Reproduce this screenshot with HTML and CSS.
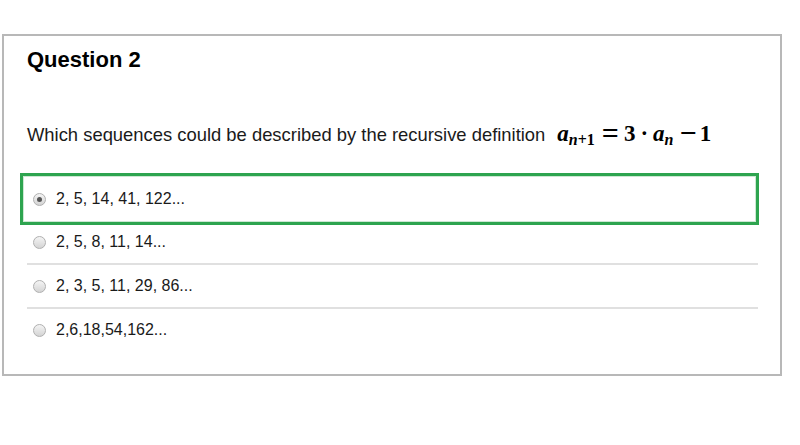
FILE: index.html
```html
<!DOCTYPE html>
<html lang="en">

<head>
  <meta charset="UTF-8" />
  <title>Question 2</title>
  <link rel="stylesheet" href="styles.css">
</head>

<body>

  <div class="card">
    <div class="card-header">
      <h2>Question 2</h2>
    </div>

    <p class="prompt">
      <span>Which sequences could be described by the recursive definition</span>
      <span class="math"><i>a</i><sub><i>n</i>+1</sub><span class="eq">=</span><b>3</b><span class="dot">&middot;</span><i>a</i><sub><i>n</i></sub><span class="minus">&minus;</span><b>1</b></span>
    </p>

    <div class="options">
      <label class="option selected">
        <input type="radio" name="q2" checked> 2, 5, 14, 41, 122...
      </label>
      <label class="option">
        <input type="radio" name="q2"> 2, 5, 8, 11, 14...
      </label>
      <label class="option">
        <input type="radio" name="q2"> 2, 3, 5, 11, 29, 86...
      </label>
      <label class="option last">
        <input type="radio" name="q2"> 2,6,18,54,162...
      </label>
    </div>
  </div>

</body>

</html>
```

FILE: styles.css
```css
body {
  margin: 0;
  background: #fff;
  font-family: "Liberation Sans", Arial, sans-serif;
  color: #111;
}

.card {
  margin: 34px 0 0 2px;
  width: 780px;
  height: 342px;
  box-sizing: border-box;
  border: 2px solid #b8b8b8;
  background: #fff;
}

.card-header {
  padding: 12px 23px 0;
}

.card-header h2 {
  margin: 0;
  font-size: 22px;
  line-height: 24px;
  font-weight: bold;
  color: #000;
}

.prompt {
  margin: 50px 0 0 23px;
  display: flex;
  align-items: baseline;
  font-size: 18.4px;
  line-height: 24px;
  color: #1a1a1a;
}

.math {
  margin-left: 12px;
  font-family: "Liberation Serif", "Times New Roman", serif;
  font-size: 23px;
  font-weight: bold;
  color: #000;
  white-space: nowrap;
}

.math i {
  font-style: italic;
}

.math sub {
  font-size: 16px;
  vertical-align: -4px;
  line-height: 0;
}

.math .eq,
.math .minus {
  font-size: 30px;
  line-height: 0;
  vertical-align: -2px;
}

.math .eq {
  margin: 0 5px 0 7px;
}

.math .dot {
  margin: 0 5px;
}

.math .minus {
  margin: 0 3px 0 6px;
}

.options {
  margin: 26px 0 0 23px;
  width: 731px;
}

.option {
  display: flex;
  align-items: center;
  height: 42px;
  padding-left: 6px;
  border-bottom: 2px solid #e0e0e0;
  font-size: 16px;
  color: #1a1a1a;
  cursor: pointer;
}

.option.selected {
  height: 52px;
  box-sizing: border-box;
  margin: 0 -1px -4px -7px;
  padding-left: 10px;
  border: 3px solid #2ea44f;
  box-shadow: inset 0 0 0 1px #cde8d3;
}

.option.last {
  border-bottom: none;
}

.option input {
  appearance: none;
  -webkit-appearance: none;
  margin: 0 10px 0 0;
  width: 13px;
  height: 13px;
  border-radius: 50%;
  border: 1px solid #b0b0b0;
  background: linear-gradient(#f4f4f4, #d4d4d4);
  box-sizing: border-box;
  position: relative;
}

.option input:checked::after {
  content: "";
  position: absolute;
  left: 3px;
  top: 3px;
  width: 5px;
  height: 5px;
  border-radius: 50%;
  background: #555;
}
```
